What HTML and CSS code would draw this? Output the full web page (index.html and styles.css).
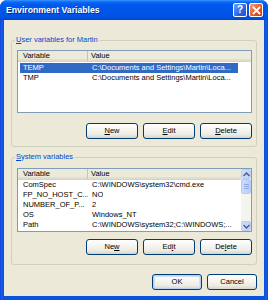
FILE: index.html
```html
<!DOCTYPE html>
<html>
<head>
<meta charset="utf-8">
<link rel="stylesheet" href="styles.css">
</head>
<body>
<div class="window">
  <div class="titlebar">
    <span class="title">Environment Variables</span>
    <div class="tb-buttons">
      <span class="tb-btn help">?</span>
      <span class="tb-btn close"><svg width="9" height="9" viewBox="0 0 9 9"><path d="M1.5 1.5 L7.5 7.5 M7.5 1.5 L1.5 7.5" stroke="#fff" stroke-width="1.8" stroke-linecap="square"/></svg></span>
    </div>
  </div>
  <div class="client">
    <fieldset class="group user">
      <legend><u>U</u>ser variables for Martin</legend>
      <div class="list user-list">
        <div class="lv-main">
          <div class="lv-head"><span class="c1">Variable</span><span class="c2">Value</span></div>
          <div class="lv-rows">
            <div class="lv-row sel"><span class="c1">TEMP</span><span class="c2">C:\Documents and Settings\Martin\Loca...</span></div>
            <div class="lv-row"><span class="c1">TMP</span><span class="c2">C:\Documents and Settings\Martin\Loca...</span></div>
          </div>
        </div>
      </div>
      <div class="btns">
        <button class="btn"><u>N</u>ew</button>
        <button class="btn"><u>E</u>dit</button>
        <button class="btn"><u>D</u>elete</button>
      </div>
    </fieldset>
    <fieldset class="group system">
      <legend><u>S</u>ystem variables</legend>
      <div class="list sys-list">
        <div class="lv-main">
          <div class="lv-head"><span class="c1">Variable</span><span class="c2">Value</span></div>
          <div class="lv-rows">
            <div class="lv-row"><span class="c1">ComSpec</span><span class="c2">C:\WINDOWS\system32\cmd.exe</span></div>
            <div class="lv-row"><span class="c1">FP_NO_HOST_C...</span><span class="c2">NO</span></div>
            <div class="lv-row"><span class="c1">NUMBER_OF_P...</span><span class="c2">2</span></div>
            <div class="lv-row"><span class="c1">OS</span><span class="c2">Windows_NT</span></div>
            <div class="lv-row"><span class="c1">Path</span><span class="c2">C:\WINDOWS\system32;C:\WINDOWS;...</span></div>
          </div>
        </div>
        <div class="scrollbar">
          <div class="sb-btn"><svg width="7" height="5" viewBox="0 0 7 5"><path d="M0.5 4 L3.5 1 L6.5 4" fill="none" stroke="#4D6185" stroke-width="1.5"/></svg></div>
          <div class="sb-thumb"><span></span><span></span><span></span></div>
          <div class="sb-track"></div>
          <div class="sb-btn"><svg width="7" height="5" viewBox="0 0 7 5"><path d="M0.5 1 L3.5 4 L6.5 1" fill="none" stroke="#4D6185" stroke-width="1.5"/></svg></div>
        </div>
      </div>
      <div class="btns">
        <button class="btn">Ne<u>w</u></button>
        <button class="btn">Ed<u>i</u>t</button>
        <button class="btn">De<u>l</u>ete</button>
      </div>
    </fieldset>
    <div class="dlg-btns">
      <button class="btn default">OK</button>
      <button class="btn">Cancel</button>
    </div>
  </div>
</div>
</body>
</html>
```

FILE: styles.css
```css
html, body {
  margin: 0;
  padding: 0;
  background: #fff;
}

.window {
  width: 268px;
  height: 300px;
  box-sizing: border-box;
  background: linear-gradient(90deg, #0831D9 0, #1E5FE8 1px, #0A52E0 3px, #0A52E0 calc(100% - 3px), #1E5FE8 calc(100% - 1px), #0831D9 100%);
  border-radius: 7px 7px 0 0;
  overflow: hidden;
  display: flex;
  flex-direction: column;
  font-family: "Liberation Sans", Arial, sans-serif;
}

.titlebar {
  height: 20px;
  flex: none;
  display: flex;
  align-items: center;
  justify-content: space-between;
  padding: 0 5px 0 6px;
  background: linear-gradient(#3D95FF 0, #0A6AF5 2px, #0058EE 5px, #0055E8 12px, #0053E3 17px, #0046D0 20px);
}

.title {
  color: #fff;
  font-weight: bold;
  font-size: 8.7px;
  text-shadow: 1px 1px 0 #0A2A9C;
}

.tb-buttons {
  display: flex;
  gap: 2px;
}

.tb-btn {
  width: 12px;
  height: 12px;
  border: 1px solid #fff;
  border-radius: 2px;
  display: flex;
  align-items: center;
  justify-content: center;
  color: #fff;
  font-weight: bold;
  font-size: 10px;
  line-height: 12px;
}

.help {
  background: linear-gradient(135deg, #6FA0FF, #2D64E6 60%, #1B4FD0);
}

.close {
  background: linear-gradient(135deg, #F5A07F, #E35A2B 55%, #C7361A);
}

.client {
  flex: 1;
  margin: 0 4px 4px;
  background: #ECE9D8;
  padding: 0 7px;
  display: flex;
  flex-direction: column;
}

.group {
  margin: 0;
  border: 1px solid #D0D0BF;
  border-radius: 3px;
  padding: 5px 4px 7px 5px;
  min-width: 0;
}

.group.user {
  margin-top: 15px;
}

.group.system {
  margin-top: 5px;
  padding-top: 6px;
  padding-bottom: 9px;
}

.group legend {
  font-size: 7.5px;
  line-height: 10px;
  color: #0046D5;
  padding: 0 1px;
  margin-left: -2px;
}

.list {
  border: 1px solid #7F9DB9;
  background: #fff;
  display: flex;
  overflow: hidden;
}

.user-list {
  height: 61px;
}

.sys-list {
  height: 62px;
}

.lv-main {
  flex: 1;
  min-width: 0;
  display: flex;
  flex-direction: column;
}

.lv-head {
  height: 11px;
  box-sizing: border-box;
  display: flex;
  background: #EBEADB;
  border-bottom: 1px solid #D6D2C2;
  box-shadow: inset 0 -2px 0 #E2DECD;
  font-size: 7.5px;
  line-height: 10px;
  color: #000;
}

.lv-head .c1 {
  width: 70px;
  box-sizing: border-box;
  padding-left: 5px;
  border-right: 1px solid #C7C5B2;
}

.lv-head .c2 {
  padding-left: 3px;
}

.user-list .lv-rows {
  padding-top: 1px;
}

.lv-row {
  display: flex;
  height: 10px;
  line-height: 10px;
  width: 218px;
  margin-left: 2px;
  font-size: 7.5px;
  color: #000;
  white-space: nowrap;
}

.lv-row .c1 {
  width: 68px;
  box-sizing: border-box;
  padding-left: 3px;
  overflow: hidden;
}

.lv-row .c2 {
  padding-left: 4px;
  overflow: hidden;
}

.lv-row.sel {
  background: #316AC5;
  color: #fff;
}

.scrollbar {
  width: 10px;
  flex: none;
  display: flex;
  flex-direction: column;
  background: #F4F3EE;
}

.sb-btn {
  height: 10px;
  box-sizing: border-box;
  border: 1px solid #B9CDF7;
  border-radius: 2px;
  background: linear-gradient(90deg, #D2DEFB, #C1D3FB);
  display: flex;
  align-items: center;
  justify-content: center;
}

.sb-thumb {
  height: 15px;
  box-sizing: border-box;
  border: 1px solid #B5C9F5;
  border-radius: 2px;
  background: linear-gradient(90deg, #CCDBFD, #B9CEFA);
  display: flex;
  flex-direction: column;
  align-items: center;
  justify-content: center;
  gap: 1px;
}

.sb-thumb span {
  width: 5px;
  height: 1px;
  background: #8FA9E8;
}

.sb-track {
  flex: 1;
  background: #F5F4EF;
}

.btns {
  display: flex;
  justify-content: flex-end;
  gap: 5px;
  margin-top: 10px;
}

.system .btns {
  margin-top: 7px;
}

.btn {
  width: 52px;
  height: 16px;
  box-sizing: border-box;
  border: 1px solid #003C74;
  border-radius: 3px;
  background: linear-gradient(#FFFFFF 0, #F6F5F0 40%, #ECEBE4 75%, #D8D4C8 100%);
  font-family: "Liberation Sans", Arial, sans-serif;
  font-size: 7.5px;
  line-height: 12px;
  color: #000;
  padding: 0;
  margin: 0;
}

.btn.default {
  box-shadow: inset 0 0 0 1px #B8D0F5, inset 0 0 0 2px #CEE0FA;
}

.dlg-btns {
  display: flex;
  justify-content: flex-end;
  gap: 5px;
  margin-top: 9px;
}

.dlg-btns .btn {
  width: 50px;
}
```
